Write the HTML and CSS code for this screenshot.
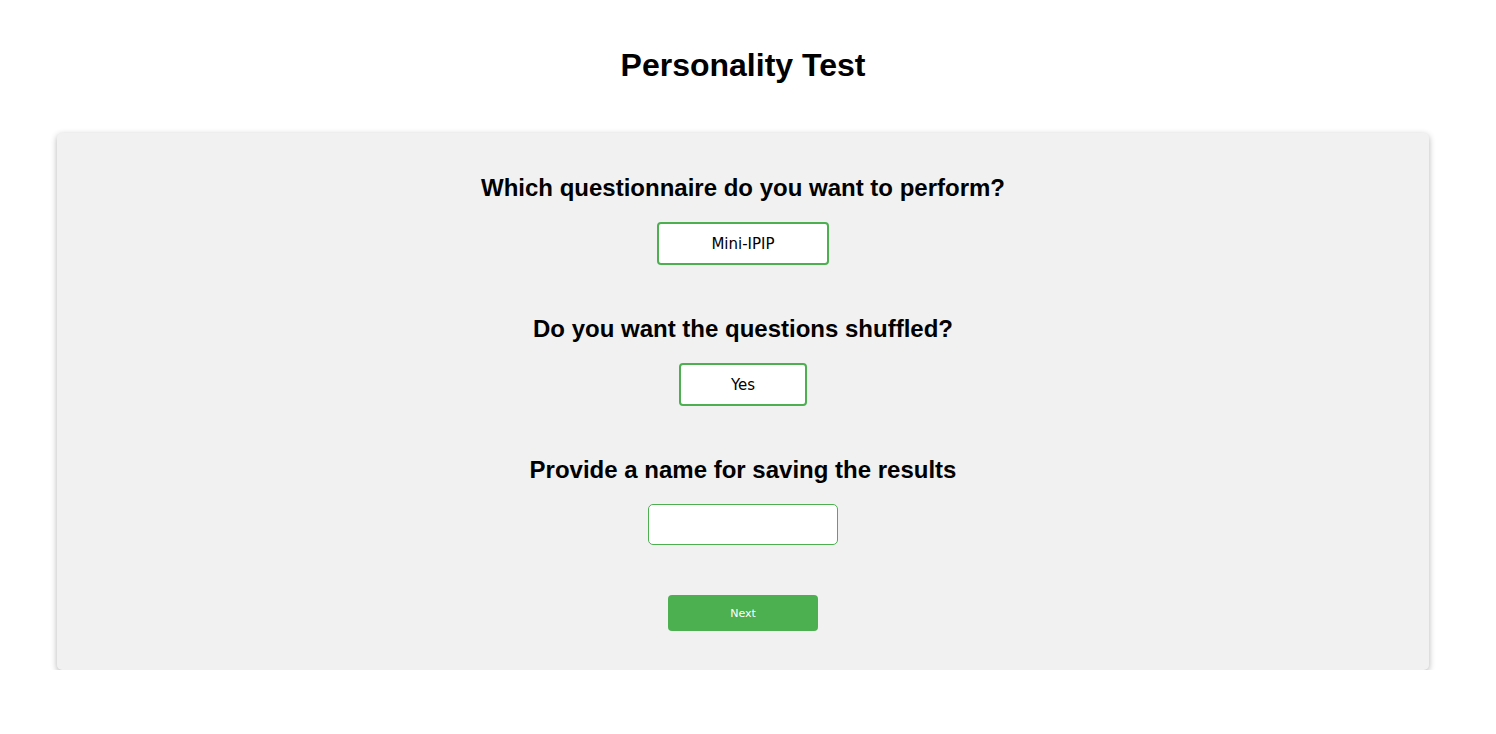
FILE: index.html
```html
<!DOCTYPE html>
<html lang="en">
<head>
<meta charset="utf-8">
<title>Personality Test</title>
<link rel="stylesheet" href="styles.css">
</head>
<body>
<div class="page">
  <h1 class="title">Personality Test</h1>
  <form class="card">
    <section class="field">
      <h2 class="question">Which questionnaire do you want to perform?</h2>
      <button type="button" class="choice choice-wide">Mini-IPIP</button>
    </section>
    <section class="field">
      <h2 class="question">Do you want the questions shuffled?</h2>
      <button type="button" class="choice choice-narrow">Yes</button>
    </section>
    <section class="field">
      <h2 class="question">Provide a name for saving the results</h2>
      <input class="name-input" type="text">
    </section>
    <button type="button" class="next">Next</button>
  </form>
</div>
</body>
</html>
```

FILE: styles.css
```css
html, body {
  margin: 0;
  padding: 0;
  background: #ffffff;
}

.page {
  width: 1486px;
  font-family: "Liberation Sans", Arial, sans-serif;
  color: #000;
}

.title {
  margin: 0;
  padding: 47px 0 49px;
  text-align: center;
  font-size: 32px;
  font-weight: bold;
  line-height: 37px;
}

.card {
  margin: 0 57px;
  background: #f1f1f1;
  border-radius: 5px;
  box-shadow: 0 2px 6px rgba(0, 0, 0, 0.3);
  padding: 41px 0 39px;
  display: flex;
  flex-direction: column;
  align-items: center;
}

.field {
  display: flex;
  flex-direction: column;
  align-items: center;
  margin-bottom: 50px;
}

.question {
  margin: 0 0 20px;
  font-size: 24px;
  line-height: 28px;
  font-weight: bold;
}

.choice {
  box-sizing: border-box;
  height: 43px;
  background: #ffffff;
  border: 2px solid #4caf50;
  border-radius: 4px;
  font-family: "DejaVu Sans", Tahoma, sans-serif;
  font-size: 15px;
  color: #000;
  padding: 0;
}

.choice-wide { width: 172px; }
.choice-narrow { width: 128px; }

.name-input {
  box-sizing: border-box;
  width: 190px;
  height: 41px;
  background: #ffffff;
  border: 1px solid #4caf50;
  border-radius: 5px;
  outline: none;
  margin: 0;
}

.next {
  box-sizing: border-box;
  width: 150px;
  height: 36px;
  background: #4caf50;
  border: none;
  border-radius: 4px;
  color: #ffffff;
  font-family: "DejaVu Sans", Tahoma, sans-serif;
  font-size: 11px;
  padding: 0;
}
```
